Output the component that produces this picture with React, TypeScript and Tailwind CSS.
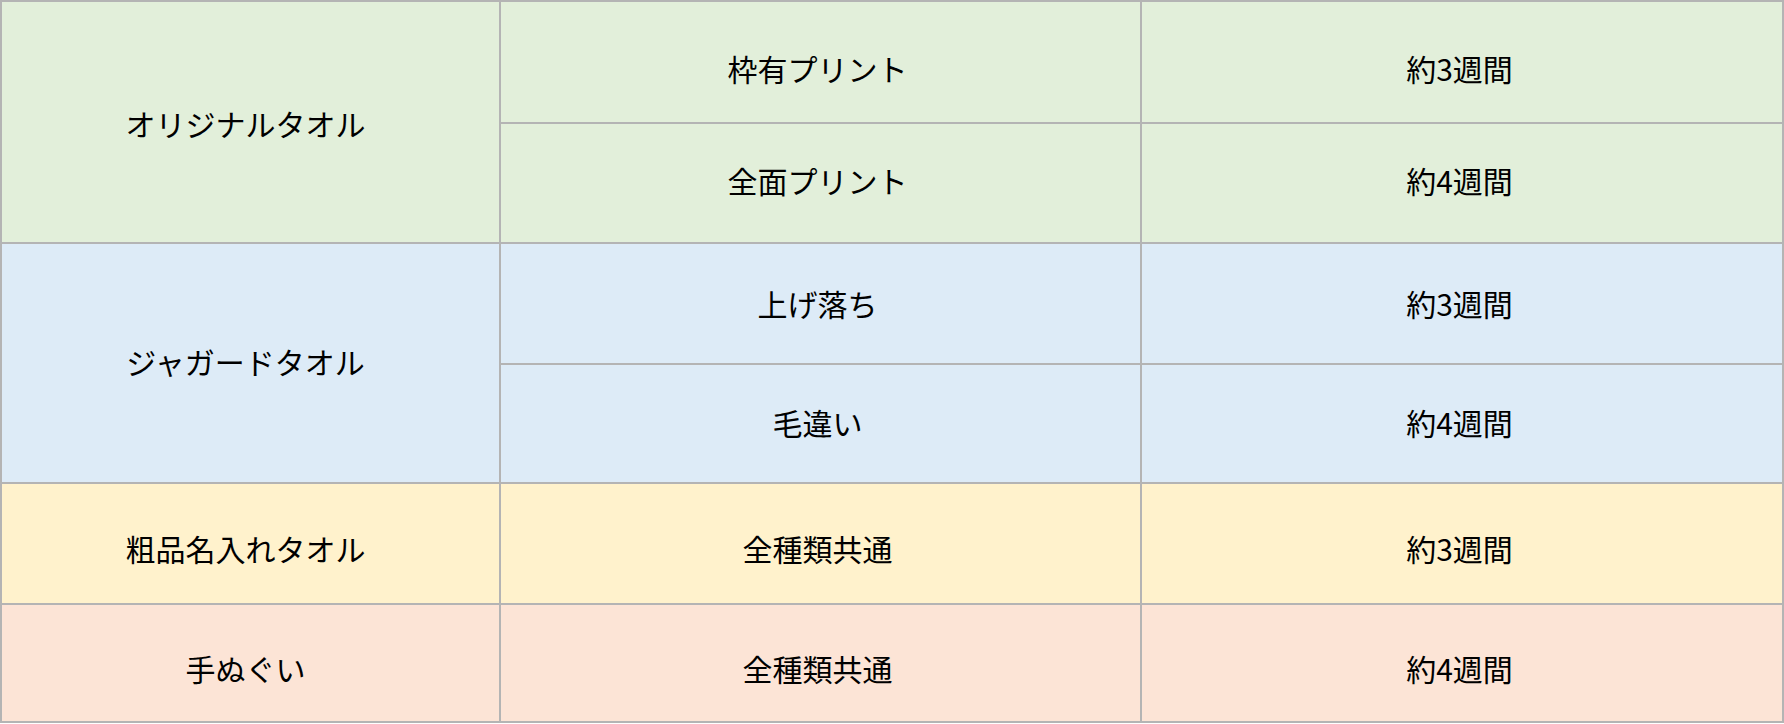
const rows = [
  { group: 'オリジナルタオル', gpad: 'pt-[2px]', bg: 'bg-[#e2efda]', items: [['枠有プリント', '約3週間', 'h-[122px] pt-[12px]'], ['全面プリント', '約4週間', 'h-[120px] pb-[6px]']] },
  { group: 'ジャガードタオル', gpad: 'pb-[4px]', bg: 'bg-[#ddebf7]', items: [['上げ落ち', '約3週間', 'h-[121px] pt-[0px]'], ['毛違い', '約4週間', 'h-[119px] pb-[2px]']] },
  { group: '粗品名入れタオル', gpad: 'pt-[10px]', bg: 'bg-[#fff2cc]', items: [['全種類共通', '約3週間', 'h-[121px] pt-[10px]']] },
  { group: '手ぬぐい', gpad: 'pt-[10px]', bg: 'bg-[#fce4d6]', items: [['全種類共通', '約4週間', 'h-[118px] pt-[10px]']] },
];

export default function App() {
  const cell = 'border-2 border-[#b4b4b4] text-center align-middle';
  return (
    <div className="w-[1784px] bg-white font-['Noto_Sans_CJK_JP','Noto_Sans',sans-serif] text-[30px] leading-[1.3] text-black">
      <table className="w-[1784px] border-collapse table-fixed">
        <colgroup>
          <col className="w-[499px]" />
          <col className="w-[641px]" />
          <col />
        </colgroup>
        <tbody>
          {rows.map((r) =>
            r.items.map(([kind, term, h], i) => (
              <tr key={r.group + kind} className={`${h.split(' ')[0]} ${r.bg}`}>
                {i === 0 && (
                  <td rowSpan={r.items.length} className={`${cell} pr-[10px] ${r.gpad}`}>
                    {r.group}
                  </td>
                )}
                <td className={`${cell} pr-[6px] ${h}`}>{kind}</td>
                <td className={`${cell} pr-[5px] ${h}`}>{term}</td>
              </tr>
            ))
          )}
        </tbody>
      </table>
    </div>
  );
}
